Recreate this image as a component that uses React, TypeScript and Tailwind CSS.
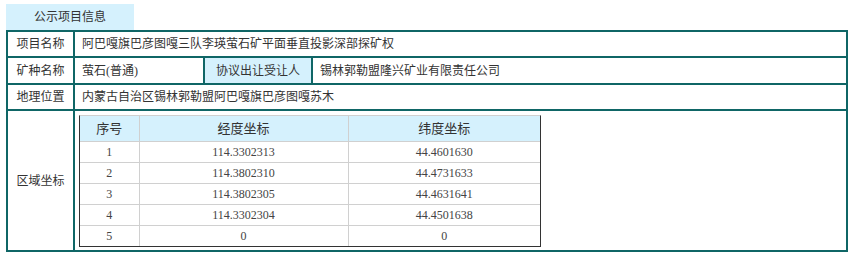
import React from 'react';

const rows = [
  { no: '1', lng: '114.3302313', lat: '44.4601630' },
  { no: '2', lng: '114.3802310', lat: '44.4731633' },
  { no: '3', lng: '114.3802305', lat: '44.4631641' },
  { no: '4', lng: '114.3302304', lat: '44.4501638' },
  { no: '5', lng: '0', lat: '0' },
];

export default function App() {
  return (
    <div
      className="bg-white w-[853px] h-[256px] pt-[4px] pl-[6px] text-[12px] text-[#333]"
      style={{ fontFamily: '"Liberation Serif", "Noto Sans CJK SC", serif' }}
    >
      {/* tab */}
      <div className="w-[128px] h-[26px] bg-[#d5f1fd] flex items-center justify-center">
        公示项目信息
      </div>

      {/* info table */}
      <div className="w-[842px] border-2 border-[#0f6666]">
        <div className="flex h-[26px] border-b-2 border-[#0f6666]">
          <div className="w-[67px] border-r-2 border-[#0f6666] flex items-center justify-center">项目名称</div>
          <div className="flex-1 flex items-center pl-[7px]">阿巴嘎旗巴彦图嘎三队李瑛萤石矿平面垂直投影深部探矿权</div>
        </div>
        <div className="flex h-[27px] border-b-2 border-[#0f6666]">
          <div className="w-[67px] border-r-2 border-[#0f6666] flex items-center justify-center">矿种名称</div>
          <div className="w-[130px] border-r-2 border-[#0f6666] flex items-center pl-[7px]">萤石(普通)</div>
          <div className="w-[108px] border-r-2 border-[#0f6666] bg-[#d5f1fd] flex items-center justify-center">
            协议出让受让人
          </div>
          <div className="flex-1 flex items-center pl-[7px]">锡林郭勒盟隆兴矿业有限责任公司</div>
        </div>
        <div className="flex h-[26px] border-b-2 border-[#0f6666]">
          <div className="w-[67px] border-r-2 border-[#0f6666] flex items-center justify-center">地理位置</div>
          <div className="flex-1 flex items-center pl-[7px]">内蒙古自治区锡林郭勒盟阿巴嘎旗巴彦图嘎苏木</div>
        </div>
        <div className="flex h-[139px]">
          <div className="w-[67px] border-r-2 border-[#0f6666] flex items-center justify-center">区域坐标</div>
          <div className="flex-1 p-[4px]">
            <div className="w-[462px] border-t border-x border-b border-t-[#d0d0d0] border-x-[#333] border-b-[#333]">
              <table className="w-full border-collapse">
                <thead>
                  <tr className="h-[25px] bg-[#d5f1fd] text-[13px]">
                    <th className="w-[59px] font-normal border-r border-b border-[#d0d0d0]">序号</th>
                    <th className="w-[209px] font-normal border-r border-b border-[#d0d0d0]">经度坐标</th>
                    <th className="font-normal border-b border-[#d0d0d0]">纬度坐标</th>
                  </tr>
                </thead>
                <tbody className="text-[#444]">
                  {rows.map((r, i) => {
                    const b = i < rows.length - 1 ? 'border-b' : '';
                    return (
                      <tr key={r.no} className="h-[21px]">
                        <td className={`text-center border-r border-[#d0d0d0] ${b}`}>{r.no}</td>
                        <td className={`text-center border-r border-[#d0d0d0] ${b}`}>{r.lng}</td>
                        <td className={`text-center border-[#d0d0d0] ${b}`}>{r.lat}</td>
                      </tr>
                    );
                  })}
                </tbody>
              </table>
            </div>
          </div>
        </div>
      </div>
    </div>
  );
}
